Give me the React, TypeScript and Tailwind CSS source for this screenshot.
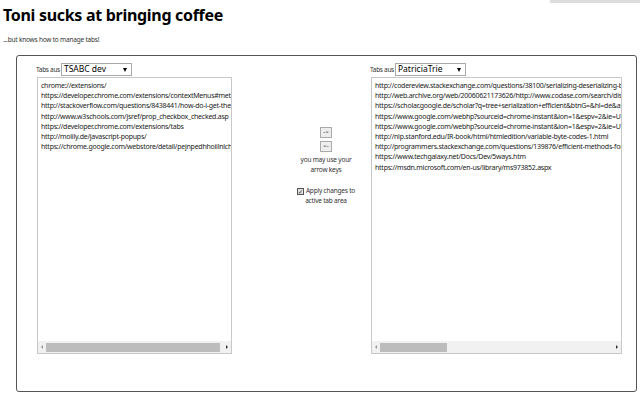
const leftTabs = [
  "chrome://extensions/",
  "https://developer.chrome.com/extensions/contextMenus#method-create",
  "http://stackoverflow.com/questions/8438441/how-do-i-get-the-context-menu-oncreate-event",
  "http://www.w3schools.com/jsref/prop_checkbox_checked.asp",
  "https://developer.chrome.com/extensions/tabs",
  "http://molily.de/javascript-popups/",
  "https://chrome.google.com/webstore/detail/pejnpedhhoiilnlchoahmcajfeifmdid/publish-delayed",
]

const rightTabs = [
  "http://codereview.stackexchange.com/questions/38100/serializing-deserializing-binary-tree",
  "http://web.archive.org/web/20060621173626/http://www.codase.com/search/display?file=",
  "https://scholar.google.de/scholar?q=tree+serialization+efficient&btnG=&hl=de&as_sdt=0",
  "https://www.google.com/webhp?sourceid=chrome-instant&ion=1&espv=2&ie=UTF-8#q=tree",
  "https://www.google.com/webhp?sourceid=chrome-instant&ion=1&espv=2&ie=UTF-8#q=serial",
  "http://nlp.stanford.edu/IR-book/html/htmledition/variable-byte-codes-1.html",
  "http://programmers.stackexchange.com/questions/139876/efficient-methods-for-storing-trees",
  "https://www.techgalaxy.net/Docs/Dev/5ways.htm",
  "https://msdn.microsoft.com/en-us/library/ms973852.aspx",
]

function TabList({ label, value, tabs, thumb }: { label: string; value: string; tabs: string[]; thumb: string }) {
  return (
    <div className="flex flex-col">
      <div className="flex items-center h-[15px] gap-[1px]">
        <span className="text-[6.5px] text-[#333] tracking-[-0.3px]">{label}</span>
        <div className="flex items-center justify-between w-[71px] h-[13px] border border-[#a9a9a9] bg-white pl-[2px] pr-[4px] text-[8.5px] text-black">
          <span>{value}</span>
          <span className="w-0 h-0 border-l-[2.5px] border-r-[2.5px] border-t-[4px] border-l-transparent border-r-transparent border-t-black" />
        </div>
      </div>
      <div className="flex flex-col border border-[#c8c8c8] bg-white h-[277px] ml-[1px]">
        <div className="flex-1 overflow-hidden pl-[3px] pt-[3px] text-[7px] leading-[10.2px] text-[#222] whitespace-nowrap tracking-[-0.25px]">
          {tabs.map((t) => (
            <div key={t}>{t}</div>
          ))}
        </div>
        <div className="flex items-center h-[12px] bg-[#f1f1f1] px-[3px] gap-[3px]">
          <span className="w-0 h-0 border-t-[2px] border-b-[2px] border-r-[2px] border-t-transparent border-b-transparent border-r-[#999]" />
          <div className={`h-[9px] bg-[#bcbcbc] ${thumb}`} />
          <div className="flex-1" />
          <span className="w-0 h-0 border-t-[2.5px] border-b-[2.5px] border-l-[2.5px] border-t-transparent border-b-transparent border-l-[#333]" />
        </div>
      </div>
    </div>
  )
}

export default function App() {
  return (
    <div className="w-[640px] h-[400px] bg-white overflow-hidden [font-family:'Liberation_Sans',Arial,sans-serif]">
      <div className="flex justify-end h-[3px]">
        <div className="w-[90px] h-[3px] bg-[#ddd]" />
      </div>
      <h1 className="ml-[3px] mt-[2px] text-[16px] leading-[20px] font-bold text-black tracking-[-0.3px]">Toni sucks at bringing coffee</h1>
      <p className="ml-[3px] mt-[11px] text-[6.5px] leading-[8px] text-[#333] tracking-[-0.2px]">...but knows how to manage tabs!</p>
      <div className="ml-[16px] mt-[11px] w-[621px] h-[337px] border border-[#555] rounded-[3px] flex pt-[6px]">
        <div className="ml-[19px] w-[196px]">
          <TabList label="Tabs aus" value="TSABC dev" tabs={leftTabs} thumb="w-[174px]" />
        </div>
        <div className="w-[138px] flex flex-col items-center pt-[65px] pl-[50px]">
          <div className="flex flex-col gap-[3px] items-center">
            <div className="w-[12px] h-[11px] border border-[#aaa] bg-[#eee] text-[6px] leading-[9px] text-center">-&gt;</div>
            <div className="w-[12px] h-[11px] border border-[#aaa] bg-[#eee] text-[6px] leading-[9px] text-center">&lt;-</div>
          </div>
          <p className="mt-[3px] text-[6.5px] leading-[10px] text-[#333] text-center whitespace-nowrap tracking-[-0.2px]">you may use your<br />arrow keys</p>
          <p className="mt-[11px] text-[6.5px] leading-[10px] text-[#333] text-center whitespace-nowrap tracking-[-0.2px]">
            <span className="inline-block w-[7px] h-[7px] border border-[#555] bg-[#ddd] text-[6px] leading-[6px] align-middle mr-[2px]">✓</span>
            Apply changes to<br />active tab area
          </p>
        </div>
        <div className="w-[252px]">
          <TabList label="Tabs aus" value="PatriciaTrie" tabs={rightTabs} thumb="w-[67px]" />
        </div>
      </div>
    </div>
  )
}
